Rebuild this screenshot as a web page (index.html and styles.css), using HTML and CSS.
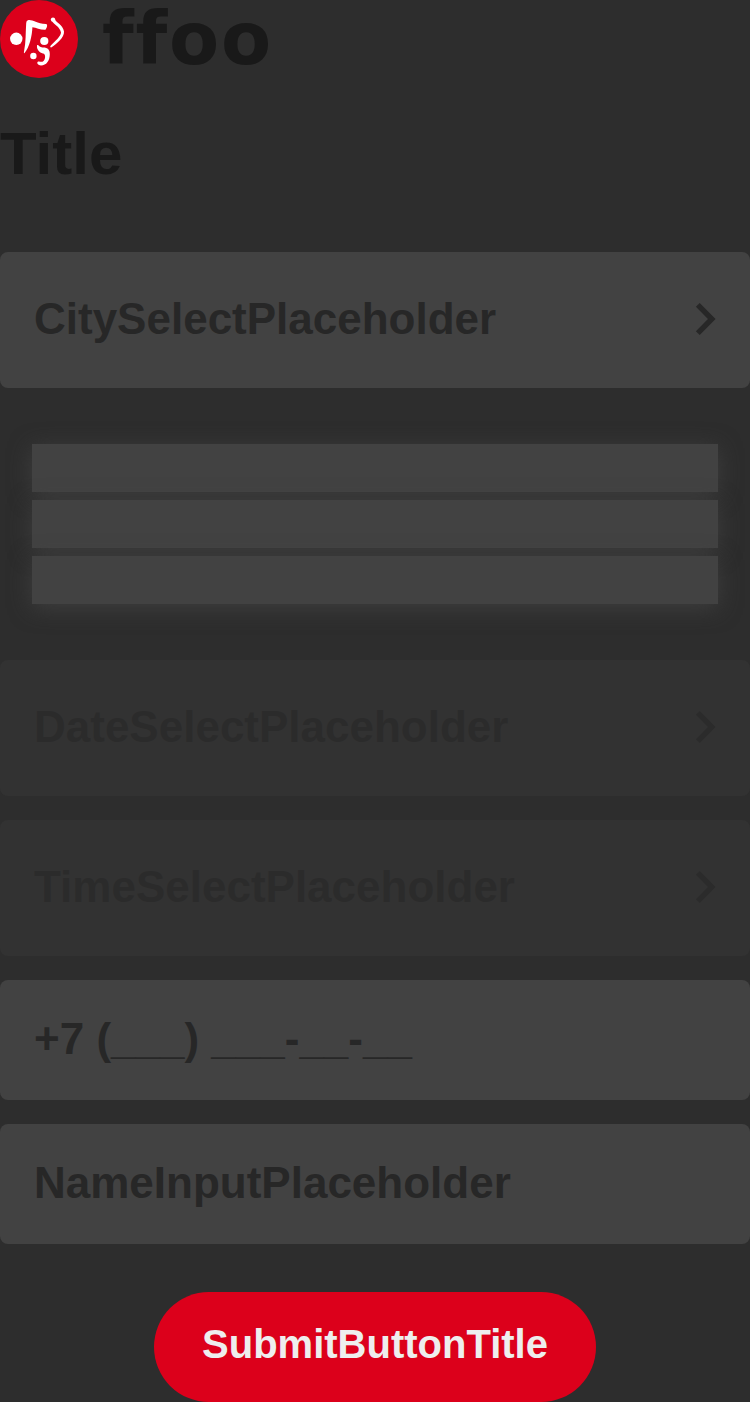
FILE: index.html
```html
<!DOCTYPE html>
<html lang="en">
<head>
<meta charset="utf-8">
<title>Title</title>
<link rel="stylesheet" href="styles.css">
</head>
<body>
<main class="page">
  <header class="brand">
    <svg class="brand-mark" viewBox="0 0 78 78" aria-hidden="true">
      <circle cx="39" cy="39" r="39" fill="#dc001b"/>
      <g fill="#fff">
        <circle cx="16.3" cy="38.8" r="6.2"/>
        <circle cx="44.3" cy="41" r="4.1"/>
        <circle cx="33.4" cy="56" r="3.2"/>
        <path d="M28 20.3C32 19.2 36 23.5 46 24.1C48 24.5 47 28 45.4 29.8C40 30 36.5 27.4 32.4 27.2C32 36 29.5 47.5 24.4 53.2C23.6 53 24 52 24.1 51C26 42 25.5 33 26.2 23Q26.4 20.6 28 20.3Z"/>
        <path d="M37 45.2C38.5 44.5 39.5 47.8 43 47.4C48 47.4 50 50 49.8 54.5C49.6 61 46.5 65.3 41 65.5C38 65.5 36.4 63 37.8 61.8C39.5 60.8 41.5 63 43.5 61C45.5 59 45.6 55.2 44 53.8C41.5 53.5 36.2 50.5 37 45.2Z"/>
        <circle cx="53" cy="19.6" r="2.2"/>
        <path d="M51.8 20.5L54.4 18.8C56 22.5 63 25 64 31.5C64.4 37.5 57 43.5 51.2 47.6C49.8 47.4 50.1 46.5 50.8 45.5C55.5 41 60.8 36 61 32.5C60 26.5 53.3 24.5 51.8 20.5Z"/>
      </g>
    </svg>
    <span class="brand-name">ffoo</span>
  </header>
  <h1 class="title">Title</h1>
  <form class="form">
    <div class="select">
      <span>CitySelectPlaceholder</span>
      <svg class="chevron" viewBox="0 0 22 34"><path d="M3.8 2.9L17.8 17L3.8 31.1" /></svg>
    </div>
    <div class="skeleton">
      <div class="skeleton-row"></div>
      <div class="skeleton-row"></div>
      <div class="skeleton-row"></div>
    </div>
    <div class="select select-disabled">
      <span>DateSelectPlaceholder</span>
      <svg class="chevron" viewBox="0 0 22 34"><path d="M3.8 2.9L17.8 17L3.8 31.1" /></svg>
    </div>
    <div class="select select-disabled">
      <span>TimeSelectPlaceholder</span>
      <svg class="chevron" viewBox="0 0 22 34"><path d="M3.8 2.9L17.8 17L3.8 31.1" /></svg>
    </div>
    <div class="input">+7 (___) ___-__-__</div>
    <div class="input">NameInputPlaceholder</div>
    <button class="submit" type="button">SubmitButtonTitle</button>
  </form>
</main>
</body>
</html>
```
FILE: styles.css
```css
* { box-sizing: border-box; }
body {
  margin: 0;
  background: #2d2d2d;
  color: #191919;
  font-family: "Liberation Sans", Arial, sans-serif;
}
.page { height: 1402px; }
.brand { display: flex; height: 78px; }
.brand-mark { width: 78px; height: 78px; flex: none; }
.brand-name {
  margin-left: 24px;
  font: bold 73px/78px "DejaVu Sans", sans-serif;
  letter-spacing: 1.8px;
}
.title {
  margin: 42px 0 0;
  font-size: 60px;
  line-height: 68px;
  font-weight: bold;
}
.form {
  display: flex;
  flex-direction: column;
  gap: 24px;
  margin-top: 64px;
}
.select, .input {
  display: flex;
  align-items: center;
  justify-content: space-between;
  padding: 0 34px 2px;
  border-radius: 8px;
  background: #424242;
  color: #272727;
  font-size: 44px;
  line-height: 50px;
  font-weight: bold;
}
.select { height: 136px; }
.input { height: 120px; }
.select-disabled { opacity: 0.25; }
.chevron { width: 22px; height: 34px; }
.chevron path { fill: none; stroke: #272727; stroke-width: 5.4; }
.skeleton {
  display: flex;
  flex-direction: column;
  gap: 8px;
  margin: 32px;
}
.skeleton-row {
  height: 48px;
  background: #424242;
  box-shadow: 0 4px 22px rgba(68, 68, 68, 0.75);
}
.submit {
  align-self: center;
  height: 110px;
  margin-top: 24px;
  padding: 0 48px 6px;
  border: 0;
  border-radius: 55px;
  background: #dc001b;
  color: #eee;
  font: bold 40px/46px "Liberation Sans", Arial, sans-serif;
}
```
